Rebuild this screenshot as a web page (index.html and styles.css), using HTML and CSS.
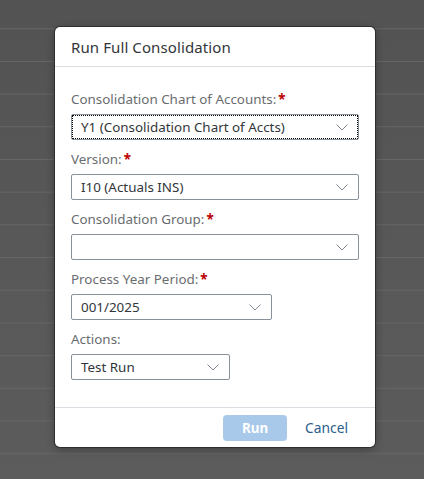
FILE: index.html
```html
<!DOCTYPE html>
<html lang="en">
<head>
<meta charset="utf-8">
<title>Run Full Consolidation</title>
<link rel="stylesheet" href="styles.css">
</head>
<body>
<div class="backdrop">
  <div class="dialog">
    <div class="dialog-header">
      <h1 class="dialog-title">Run Full Consolidation</h1>
    </div>
    <div class="dialog-content">
      <div class="field">
        <label class="field-label">Consolidation Chart of Accounts:<span class="req">*</span></label>
        <div class="select select-wide select-focus">
          <span class="select-value">Y1 (Consolidation Chart of Accts)</span>
          <svg class="chev" viewBox="0 0 12 7" width="12" height="7"><path d="M0.5 0.5 L6 6 L11.5 0.5" fill="none" stroke="#7f8a96" stroke-width="1"/></svg>
        </div>
      </div>
      <div class="field">
        <label class="field-label">Version:<span class="req">*</span></label>
        <div class="select select-wide">
          <span class="select-value">I10 (Actuals INS)</span>
          <svg class="chev" viewBox="0 0 12 7" width="12" height="7"><path d="M0.5 0.5 L6 6 L11.5 0.5" fill="none" stroke="#7f8a96" stroke-width="1"/></svg>
        </div>
      </div>
      <div class="field">
        <label class="field-label">Consolidation Group:<span class="req">*</span></label>
        <div class="select select-wide">
          <span class="select-value"></span>
          <svg class="chev" viewBox="0 0 12 7" width="12" height="7"><path d="M0.5 0.5 L6 6 L11.5 0.5" fill="none" stroke="#7f8a96" stroke-width="1"/></svg>
        </div>
      </div>
      <div class="field">
        <label class="field-label">Process Year Period:<span class="req">*</span></label>
        <div class="select select-mid">
          <span class="select-value">001/2025</span>
          <svg class="chev" viewBox="0 0 12 7" width="12" height="7"><path d="M0.5 0.5 L6 6 L11.5 0.5" fill="none" stroke="#7f8a96" stroke-width="1"/></svg>
        </div>
      </div>
      <div class="field">
        <label class="field-label">Actions:</label>
        <div class="select select-small">
          <span class="select-value">Test Run</span>
          <svg class="chev" viewBox="0 0 12 7" width="12" height="7"><path d="M0.5 0.5 L6 6 L11.5 0.5" fill="none" stroke="#7f8a96" stroke-width="1"/></svg>
        </div>
      </div>
    </div>
    <div class="dialog-footer">
      <button class="btn btn-run">Run</button>
      <button class="btn btn-cancel">Cancel</button>
    </div>
  </div>
</div>
</body>
</html>
```
FILE: styles.css
```css
* { box-sizing: border-box; }
html, body { margin: 0; padding: 0; }
body {
  width: 424px;
  height: 479px;
  overflow: hidden;
  font-family: "Noto Sans", "Open Sans", sans-serif;
}
.backdrop {
  width: 424px;
  height: 479px;
  padding: 27px 0 0 55px;
  background-color: #5a5a5a;
  background-image:
    repeating-linear-gradient(to bottom, transparent 0px, transparent 29px, #666 29px, #666 30px, transparent 30px, transparent 32.7px),
    linear-gradient(to bottom, #535353, #5c5c5c);
  background-size: 100% 32.7px, 100% 100%;
  background-position: 0 -0.5px, 0 0;
}
.dialog {
  width: 320px;
  height: 420px;
  background: #fff;
  border-radius: 5px;
  box-shadow: 0 0 0 1px #2e2e2e, 0 2px 10px rgba(0,0,0,0.35);
  display: flex;
  flex-direction: column;
  overflow: hidden;
}
.dialog-header {
  height: 40px;
  border-bottom: 1px solid #dadee2;
  display: flex;
  align-items: center;
  padding: 0 16px;
}
.dialog-title {
  margin: 0;
  font-size: 15px;
  font-weight: 400;
  color: #32363a;
  letter-spacing: 0.1px;
}
.dialog-content {
  flex: 1;
  padding: 23px 16px 0 16px;
}
.field {
  display: flex;
  flex-direction: column;
  gap: 6px;
  margin-bottom: 10px;
}
.field-label {
  height: 18px;
  line-height: 18px;
  font-size: 13.4px;
  color: #6a6d70;
}
.req {
  color: #bb0000;
  font-weight: 700;
  margin-left: 2px;
}
.select {
  height: 26px;
  border: 1px solid #89919a;
  border-radius: 2px;
  background: #fff;
  display: flex;
  align-items: center;
  justify-content: space-between;
  padding: 0 9px 0 9px;
}
.select-wide { width: 288px; }
.select-mid { width: 201px; }
.select-small { width: 159px; }
.select-focus {
  outline: 1px dotted #000;
  outline-offset: -2px;
}
.select-value {
  font-size: 13.4px;
  color: #32363a;
  white-space: nowrap;
}
.chev { flex: none; margin-right: 1px; }
.dialog-footer {
  height: 40px;
  border-top: 1px solid #dadee2;
  display: flex;
  align-items: center;
  justify-content: flex-end;
  gap: 10px;
  padding: 0 19px 0 0;
}
.btn {
  height: 26px;
  border: none;
  border-radius: 4px;
  font-family: "Noto Sans", "Open Sans", sans-serif;
  font-size: 13.4px;
  cursor: pointer;
}
.btn-run {
  width: 64px;
  background: #a8c9ea;
  color: #fff;
  font-weight: 700;
}
.btn-cancel {
  background: transparent;
  color: #2c5d8c;
  padding: 0 8px;
  font-size: 13.8px;
}
```
